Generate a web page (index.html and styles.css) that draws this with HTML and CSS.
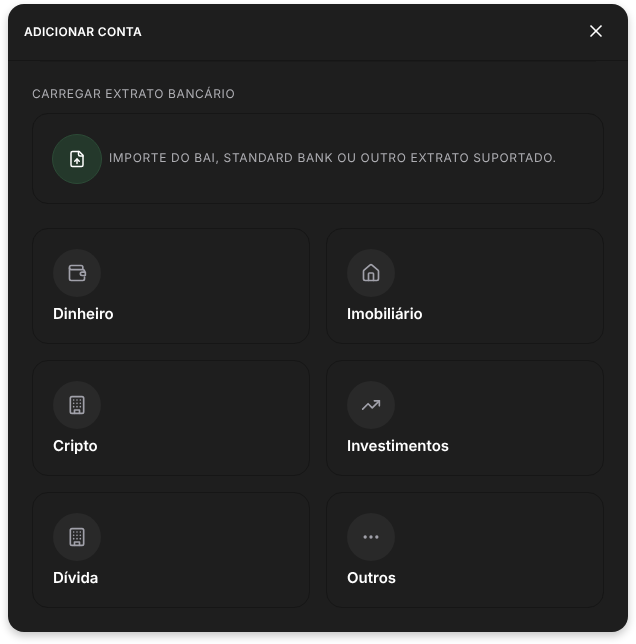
FILE: index.html
```html
<!DOCTYPE html>
<html lang="pt">
<head>
<meta charset="utf-8">
<title>Adicionar conta</title>
<link rel="stylesheet" href="styles.css">
</head>
<body>
<main class="modal">
  <header class="modal-header">
    <h1 class="modal-title">ADICIONAR CONTA</h1>
    <button class="close" aria-label="Fechar">
      <svg width="20" height="20" viewBox="0 0 24 24" fill="none" stroke="#fff" stroke-width="2" stroke-linecap="round" stroke-linejoin="round"><path d="M18 6 6 18"/><path d="m6 6 12 12"/></svg>
    </button>
  </header>
  <section class="modal-body">
    <h2 class="section-label">CARREGAR EXTRATO BANCÁRIO</h2>
    <div class="upload-card">
      <span class="upload-icon">
        <svg width="18" height="18" viewBox="0 0 24 24" fill="none" stroke="#fff" stroke-width="2" stroke-linecap="round" stroke-linejoin="round"><path d="M15 2H6a2 2 0 0 0-2 2v16a2 2 0 0 0 2 2h12a2 2 0 0 0 2-2V7Z"/><path d="M14 2v4a2 2 0 0 0 2 2h4"/><path d="M12 18v-6"/><path d="m9 15 3-3 3 3"/></svg>
      </span>
      <p class="upload-text">IMPORTE DO BAI, STANDARD BANK OU OUTRO EXTRATO SUPORTADO.</p>
    </div>
    <div class="grid">
      <article class="card">
        <span class="card-icon"><svg width="20" height="20" viewBox="0 0 24 24" fill="none" stroke="#a1a1aa" stroke-width="2" stroke-linecap="round" stroke-linejoin="round"><path d="M19 7V5a2 2 0 0 0-2-2H5a2 2 0 0 0-2 2v14a2 2 0 0 0 2 2h14a2 2 0 0 0 2-2v-2"/><path d="M3 6a2 2 0 0 0 2 2h14a2 2 0 0 1 2 2v1"/><path d="M22 11h-4a2 2 0 0 0 0 4h4Z"/></svg></span>
        <h3 class="card-label">Dinheiro</h3>
      </article>
      <article class="card">
        <span class="card-icon"><svg width="20" height="20" viewBox="0 0 24 24" fill="none" stroke="#a1a1aa" stroke-width="2" stroke-linecap="round" stroke-linejoin="round"><path d="M15 21v-8a1 1 0 0 0-1-1h-4a1 1 0 0 0-1 1v8"/><path d="M3 10a2 2 0 0 1 .7-1.5l7-6a2 2 0 0 1 2.6 0l7 6A2 2 0 0 1 21 10v9a2 2 0 0 1-2 2H5a2 2 0 0 1-2-2z"/></svg></span>
        <h3 class="card-label">Imobiliário</h3>
      </article>
      <article class="card">
        <span class="card-icon"><svg width="20" height="20" viewBox="0 0 24 24" fill="none" stroke="#a1a1aa" stroke-width="2" stroke-linecap="round" stroke-linejoin="round"><rect x="4" y="2" width="16" height="20" rx="2"/><path d="M9 22v-4h6v4"/><path d="M8 6h.01M12 6h.01M16 6h.01M8 10h.01M12 10h.01M16 10h.01M8 14h.01M12 14h.01M16 14h.01"/></svg></span>
        <h3 class="card-label">Cripto</h3>
      </article>
      <article class="card">
        <span class="card-icon"><svg width="20" height="20" viewBox="0 0 24 24" fill="none" stroke="#a1a1aa" stroke-width="2" stroke-linecap="round" stroke-linejoin="round"><path d="M22 7 13.5 15.5 8.5 10.5 2 17"/><path d="M16 7h6v6"/></svg></span>
        <h3 class="card-label">Investimentos</h3>
      </article>
      <article class="card">
        <span class="card-icon"><svg width="20" height="20" viewBox="0 0 24 24" fill="none" stroke="#a1a1aa" stroke-width="2" stroke-linecap="round" stroke-linejoin="round"><rect x="4" y="2" width="16" height="20" rx="2"/><path d="M9 22v-4h6v4"/><path d="M8 6h.01M12 6h.01M16 6h.01M8 10h.01M12 10h.01M16 10h.01M8 14h.01M12 14h.01M16 14h.01"/></svg></span>
        <h3 class="card-label">Dívida</h3>
      </article>
      <article class="card">
        <span class="card-icon"><svg width="20" height="20" viewBox="0 0 24 24" fill="none" stroke="#a1a1aa" stroke-width="2" stroke-linecap="round" stroke-linejoin="round"><circle cx="12" cy="12" r="1"/><circle cx="19" cy="12" r="1"/><circle cx="5" cy="12" r="1"/></svg></span>
        <h3 class="card-label">Outros</h3>
      </article>
    </div>
  </section>
</main>
</body>
</html>
```
FILE: styles.css
```css
* { box-sizing: border-box; }
html, body { margin: 0; height: 100%; background: #fff; }
body {
  padding: 4px 8px 12px;
  font-family: Inter, "Liberation Sans", sans-serif;
  text-rendering: geometricPrecision;
  overflow: hidden;
}
.modal {
  width: 620px;
  height: 628px;
  background: #1e1e1e;
  border-radius: 16px;
  box-shadow: 0 4px 8px rgba(0, 0, 0, 0.22);
  overflow: hidden;
}
.modal-header {
  position: relative;
  height: 57px;
  padding: 0 24px 2px 16px;
  display: flex;
  align-items: center;
  justify-content: space-between;
  border-bottom: 1px solid #161616;
}
.modal-header::after {
  content: "";
  position: absolute;
  left: 32px;
  right: 32px;
  bottom: -2px;
  height: 1px;
  background: #1a1a1a;
}
.modal-title { margin: 0; font-size: 12px; font-weight: 600; color: #fff; letter-spacing: 0.3px; will-change: opacity; }
.close { width: 20px; height: 20px; padding: 0; border: 0; background: none; display: flex; margin-right: -2px; }
.modal-body { padding: 25px 24px 24px; }
.section-label { margin: 0 0 11px; font-size: 12px; line-height: 16px; font-weight: 400; letter-spacing: 0.64px; color: #adadb2; will-change: opacity; }
.upload-card {
  height: 91px;
  padding: 0 19px;
  display: flex;
  align-items: center;
  gap: 7px;
  border: 1px solid #161616;
  border-radius: 16px;
}
.upload-icon {
  width: 50px;
  height: 50px;
  flex: none;
  display: flex;
  align-items: center;
  justify-content: center;
  border-radius: 50%;
  background: #24382b;
  border: 1px solid #2c4a36;
}
.upload-text { margin: 0 0 2px; font-size: 12px; letter-spacing: 0.64px; color: #adadb2; will-change: opacity; }
.grid { margin-top: 24px; display: grid; grid-template-columns: 1fr 1fr; gap: 16px; }
.card {
  height: 116px;
  padding: 20px;
  border: 1px solid #161616;
  border-radius: 16px;
}
.card-icon {
  width: 48px;
  height: 48px;
  display: flex;
  align-items: center;
  justify-content: center;
  border-radius: 50%;
  background: #292929;
}
.card-label { margin: 7px 0 0; font-size: 15px; line-height: 20px; font-weight: 600; color: #fff; will-change: opacity; }
```
